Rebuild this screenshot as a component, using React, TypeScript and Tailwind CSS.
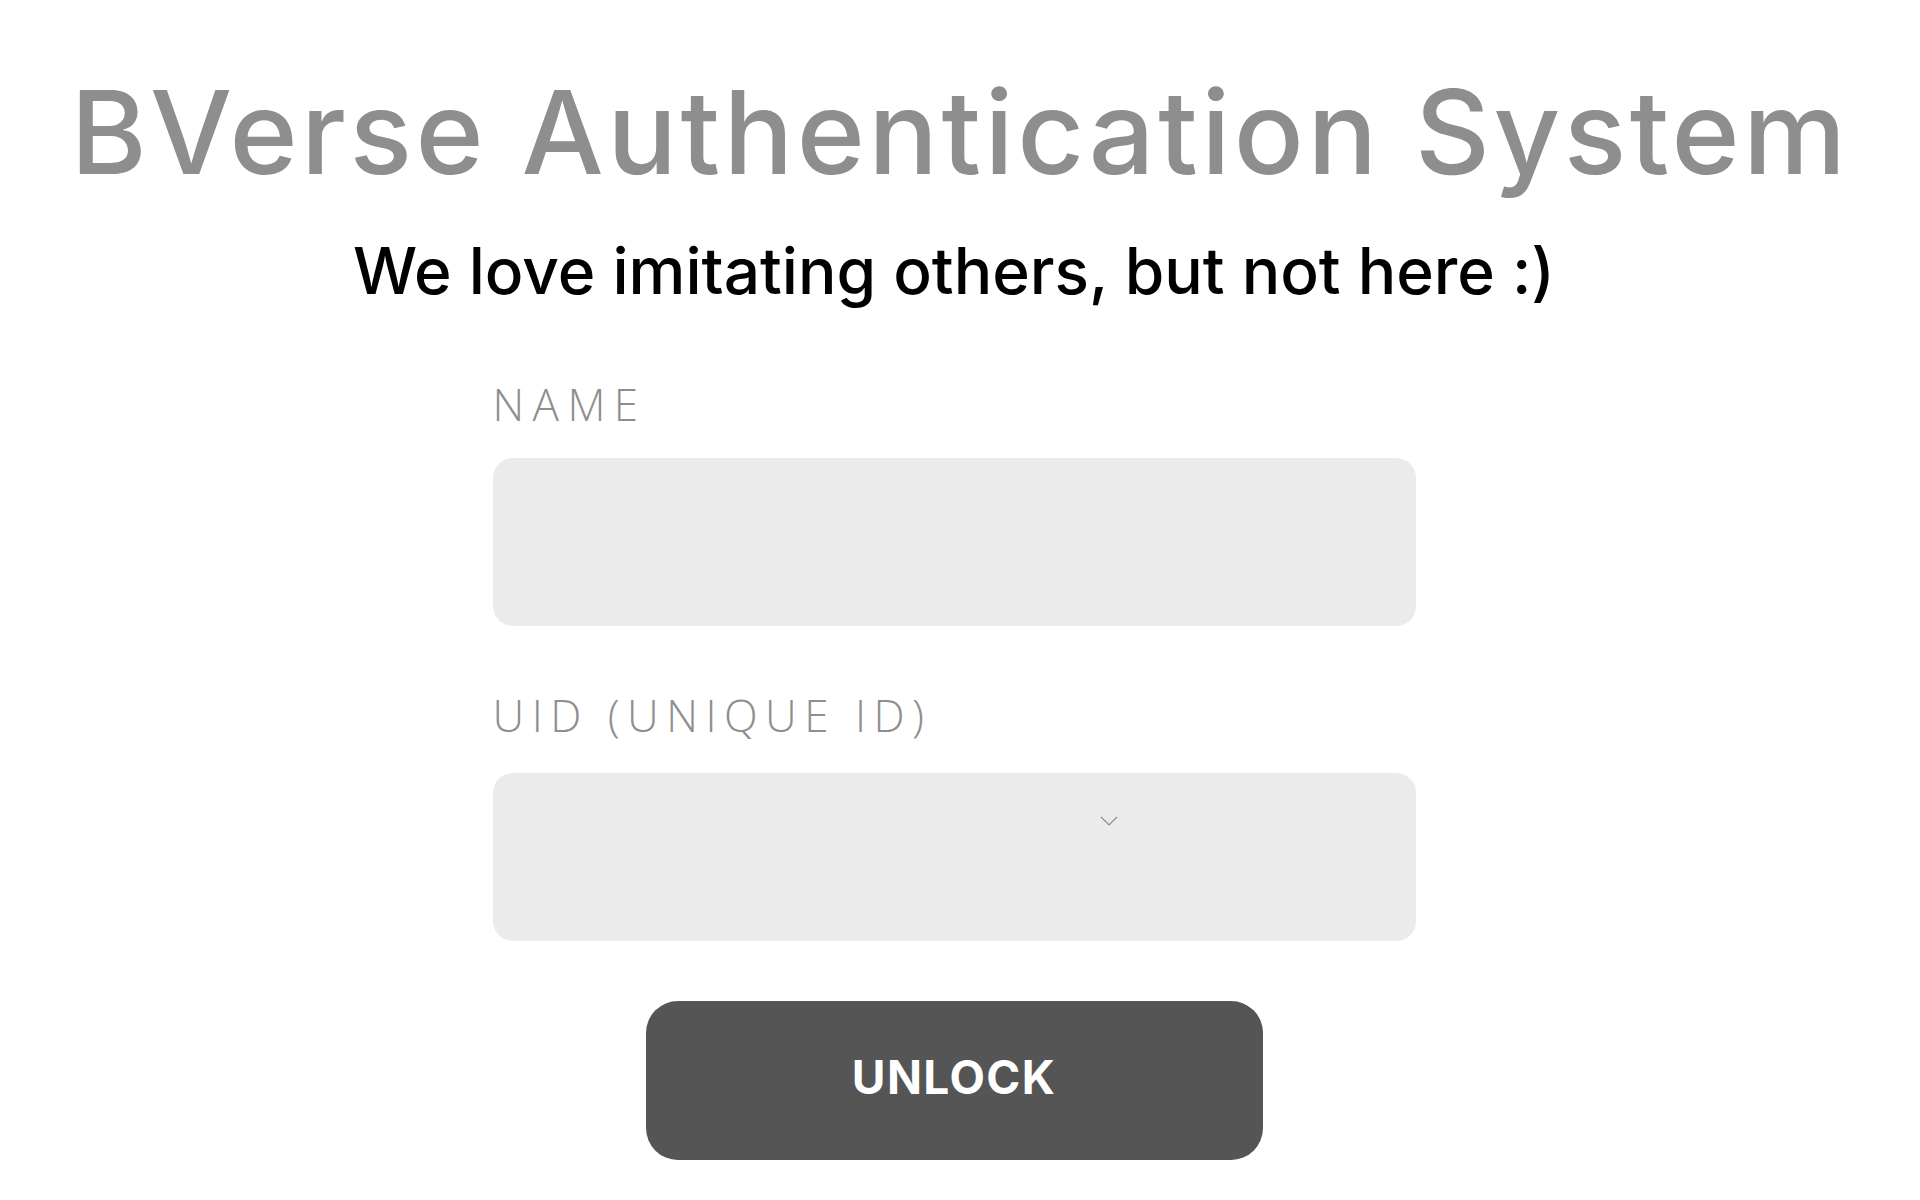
export default function App() {
  return (
    <div className="min-h-screen bg-white flex flex-col items-center font-['Inter',sans-serif]">
      <h1 className="mt-[62px] text-[116px] leading-[140px] font-medium text-[#8e8e8e] tracking-[0.03em] text-center">
        BVerse Authentication System
      </h1>
      <p className="mt-[29px] text-[64px] leading-[80px] font-medium text-black text-center -translate-x-[6px]">
        We love imitating others, but not here :)
      </p>
      <form className="mt-[65px] w-[923px] flex flex-col -translate-x-[6px]">
        <label className="font-['Open_Sans',sans-serif] font-light text-[44px] leading-[56px] tracking-[0.19em] text-[#8e8e8e]">
          NAME
        </label>
        <input
          type="text"
          className="mt-[26px] h-[168px] w-full rounded-[20px] bg-[#ebebeb] outline-none px-6 text-4xl"
        />
        <label className="mt-[61px] font-['Open_Sans',sans-serif] font-light text-[44px] leading-[56px] tracking-[0.17em] text-[#8e8e8e]">
          UID (UNIQUE ID)
        </label>
        <div className="mt-[30px] h-[168px] w-full rounded-[20px] bg-[#ebebeb] relative">
          <svg
            className="absolute left-[606px] top-[42px]"
            width="20"
            height="12"
            viewBox="0 0 20 12"
            fill="none"
            stroke="#8e8e8e"
            strokeWidth="1.2"
          >
            <path d="M2 2 L10 10 L18 2" />
          </svg>
        </div>
        <button
          type="button"
          className="mt-[60px] self-center w-[617px] h-[159px] pb-[6px] rounded-[32px] bg-[#555555] text-white font-bold text-[46px] tracking-[0.03em]"
        >
          UNLOCK
        </button>
      </form>
    </div>
  );
}
